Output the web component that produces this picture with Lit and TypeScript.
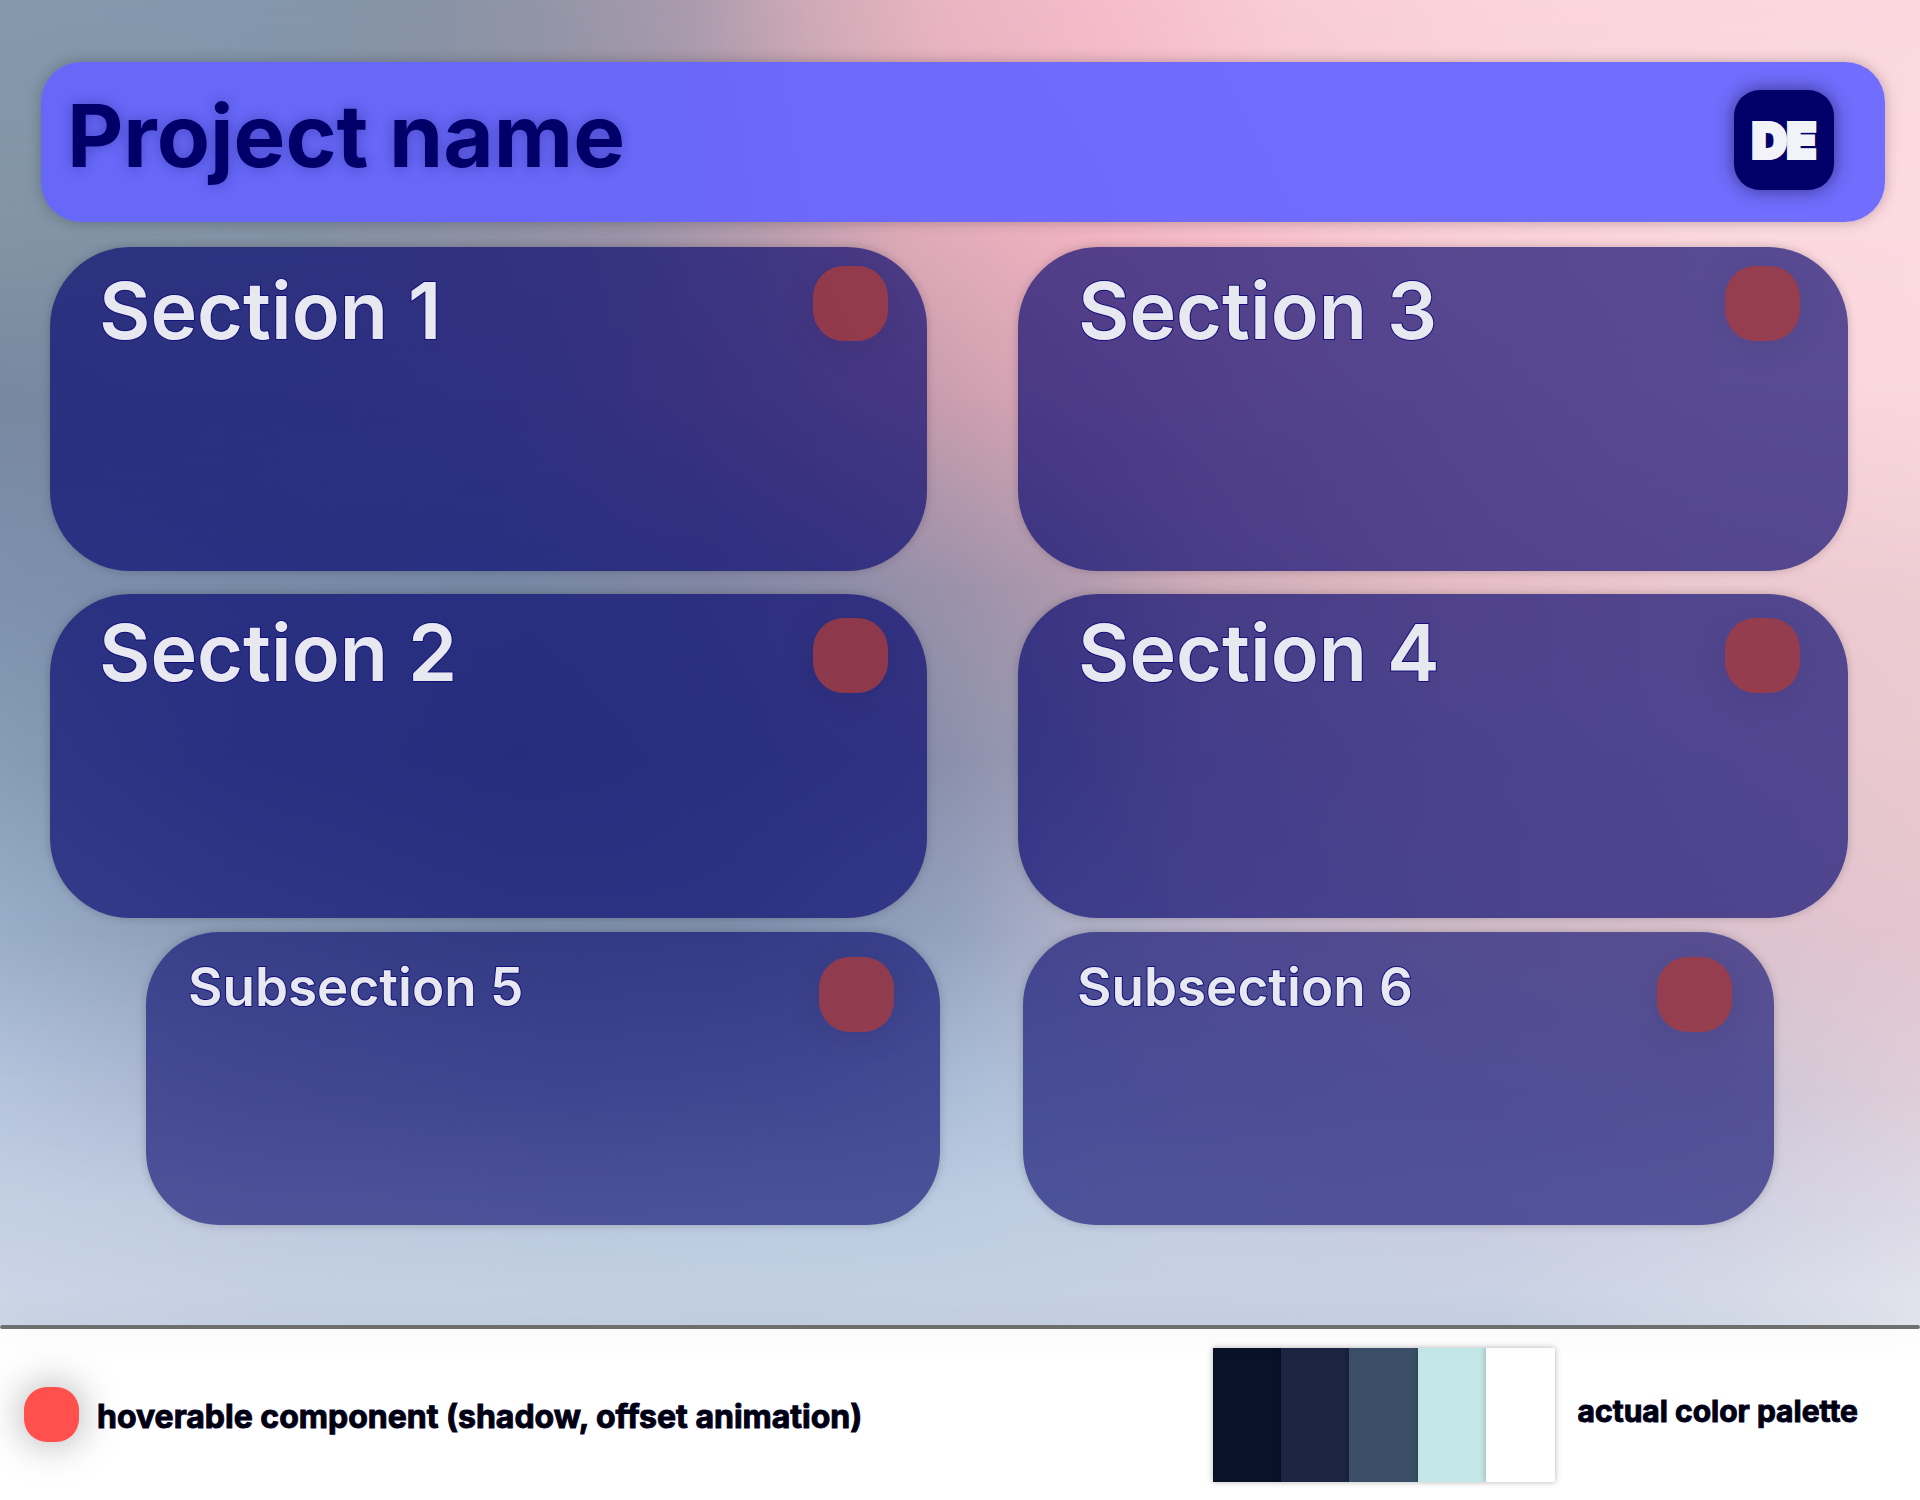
import { LitElement, html, css } from "lit";
import { customElement, property } from "lit/decorators.js";
import { styleMap } from "lit/directives/style-map.js";

/* Colour field behind the board: each band is one horizontal gradient,
   faded in over the band above it. Positions are percentages. */
interface Band {
  at: number;
  stops: [string, number][];
}

const BANDS: Band[] = [
  { at: 0, stops: [["#8699ad", 0], ["#8497ad", 13], ["#8894a6", 22], ["#9295a7", 28], ["#ab9bae", 36], ["#cfaab7", 42], ["#eab5c2", 49], ["#f6bdcb", 58], ["#f9cdd5", 67], ["#fbd5dc", 80], ["#fcd8df", 100]] },
  { at: 18, stops: [["#8294a5", 0], ["#8391a5", 16], ["#8f90a4", 26], ["#9b93a8", 33], ["#b89dae", 40], ["#dda9b7", 47], ["#efb2c0", 56], ["#f6bdc9", 64], ["#f9cfd6", 76], ["#fbd8de", 90], ["#fdd9e0", 100]] },
  { at: 30, stops: [["#7888a0", 0], ["#7b88a5", 13], ["#8589a5", 26], ["#a28ea5", 36], ["#c098aa", 45], ["#cfa0b0", 51], ["#dea9b9", 57], ["#ebb9c5", 66], ["#f2c8d0", 78], ["#fad5dc", 90], ["#fbd7dd", 100]] },
  { at: 44, stops: [["#7d90ae", 0], ["#798ba8", 13], ["#7488a5", 25], ["#8187a4", 37], ["#918ea9", 45], ["#9d92aa", 50], ["#ad98ad", 55], ["#cfacb8", 63], ["#e5bdc6", 76], ["#ecc8d0", 88], ["#efccd3", 100]] },
  { at: 57, stops: [["#869db5", 0], ["#7a8baa", 12], ["#6e829f", 27], ["#7986a4", 38], ["#8a8fab", 49], ["#9899b1", 54], ["#c0aec0", 62], ["#d8bcc8", 75], ["#e3c6cf", 88], ["#ebc9d0", 100]] },
  { at: 70, stops: [["#98adc8", 0], ["#8b9db8", 12], ["#7e92ad", 26], ["#8190ae", 38], ["#94a2bf", 50], ["#aaaec6", 55], ["#c1b7cb", 64], ["#d1bdca", 76], ["#dcc3ce", 88], ["#e4c5cf", 100]] },
  { at: 82, stops: [["#b5c3dc", 0], ["#a7b2ce", 13], ["#9ba9c8", 30], ["#a1afcd", 42], ["#adbfd8", 51], ["#b9c0d7", 60], ["#c5c2d5", 76], ["#cec6d6", 90], ["#dfcdd9", 100]] },
  { at: 91, stops: [["#c3d0e3", 0], ["#bfcadf", 13], ["#bac9de", 30], ["#bbcce1", 48], ["#c4cfe2", 62], ["#c8cce1", 76], ["#d1d1e2", 90], ["#dcd8e5", 100]] },
  { at: 100, stops: [["#cdd6e7", 0], ["#c6d2e4", 15], ["#c5d1e3", 40], ["#c7d1e4", 62], ["#c9d3e5", 78], ["#d5dce9", 90], ["#e3e6ee", 100]] },
];

const PALETTE = ["#0a122a", "#1c2541", "#3b5068", "#c3e8e7", "#ffffff"];

@customElement("color-field")
export class ColorField extends LitElement {
  static styles = css`
    :host {
      position: absolute;
      inset: 0;
    }
    .band {
      position: absolute;
      inset: 0;
    }
  `;

  render() {
    return BANDS.map((band, i) => {
      const stops = band.stops.map(([c, p]) => `${c} ${p}%`).join(", ");
      const fade = i
        ? `linear-gradient(to bottom, transparent ${BANDS[i - 1].at}%, #000 ${band.at}%)`
        : "none";
      return html`<div
        class="band"
        style=${styleMap({
          backgroundImage: `linear-gradient(to right, ${stops})`,
          maskImage: fade,
        })}
      ></div>`;
    });
  }
}

@customElement("section-card")
export class SectionCard extends LitElement {
  @property() heading = "";

  static styles = css`
    :host {
      display: flex;
      justify-content: space-between;
      align-items: flex-start;
      box-sizing: border-box;
      min-height: 324px;
      padding: 19px 39px 24px 49px;
      border-radius: 80px;
      background: rgba(0, 0, 107, 0.65);
      box-shadow: 0 0 10px rgba(0, 0, 0, 0.2);
    }
    :host([wide]) {
      padding-left: 60px;
      padding-right: 48px;
    }
    :host([lower]) {
      padding-top: 14px;
    }
    :host([lower]) .action {
      margin-top: 10px;
    }
    :host([sub]) {
      min-height: 293px;
      padding: 25px 46px 25px 42px;
      border-radius: 73px;
      background: rgba(0, 0, 105, 0.6);
    }
    :host([sub][wide]) {
      padding-left: 54px;
      padding-right: 42px;
    }
    .title {
      margin: 0;
      font-size: 79px;
      line-height: 88px;
      font-weight: 600;
      color: #e7e8f0;
      -webkit-text-stroke: 2px #14107a;
      paint-order: stroke fill;
    }
    :host([sub]) .title {
      font-size: 53px;
      line-height: 60px;
    }
    .action {
      flex: none;
      width: 75px;
      height: 75px;
      padding: 0;
      border: 0;
      border-radius: 31px;
      background: rgba(166, 59, 63, 0.8);
      box-shadow: 0 4px 36px rgba(0, 0, 0, 0.08);
      cursor: pointer;
      transition: translate 0.2s, box-shadow 0.2s;
    }
    .action:hover {
      translate: 0 -4px;
      box-shadow: 0 8px 30px rgba(0, 0, 0, 0.4);
    }
  `;

  render() {
    return html`
      <h2 class="title">${this.heading}</h2>
      <button class="action" type="button" aria-label="Open ${this.heading}"></button>
    `;
  }
}

@customElement("app-root")
export class AppRoot extends LitElement {
  static styles = css`
    :host {
      display: flex;
      flex-direction: column;
      min-height: 100vh;
      background: #fff;
      font-family: Inter, "Open Sans", sans-serif;
    }
    .board {
      position: relative;
      isolation: isolate;
      padding-bottom: 100px;
    }
    color-field {
      z-index: -1;
    }
    .bar {
      display: flex;
      align-items: center;
      justify-content: space-between;
      box-sizing: border-box;
      min-height: 160px;
      margin: 0 35px 25px 41px;
      padding: 0 51px 4px 26px;
      border-radius: 40px;
      background: rgba(101, 100, 255, 0.92);
      box-shadow: 0 0 14px rgba(0, 0, 0, 0.25);
    }
    .top {
      padding-top: 62px;
    }
    .name {
      margin: 0;
      padding-bottom: 8px;
      font-size: 87px;
      line-height: 104px;
      font-weight: 700;
      color: #000068;
      text-shadow: 0 0 14px rgba(0, 0, 80, 0.3);
    }
    .lang {
      width: 100px;
      height: 100px;
      padding: 0;
      border: 0;
      border-radius: 26px;
      background: #000068;
      color: #f2f2f9;
      font-family: inherit;
      font-size: 48px;
      font-weight: 900;
      -webkit-text-stroke: 4px #f2f2f9;
      stroke-linejoin: round;
      box-shadow: 0 0 18px rgba(0, 0, 40, 0.55);
      cursor: pointer;
    }
    .sections {
      display: grid;
      grid-template-columns: 877fr 830fr;
      gap: 23px 91px;
      padding: 0 72px 14px 50px;
    }
    .subsections {
      display: grid;
      grid-template-columns: 794fr 751fr;
      gap: 83px;
      padding: 0 146px;
    }
    .divider {
      position: relative;
      width: 100%;
      height: 4px;
      margin: 0;
      border: 0;
      border-radius: 2px;
      background: #6e7070;
      box-shadow: 0 0 36px rgba(0, 0, 0, 0.2);
    }
    .legend {
      display: flex;
      flex: 1;
      align-items: center;
      padding: 0 62px 0 24px;
      color: #00000f;
      font-size: 32px;
      line-height: 36px;
      font-weight: 700;
    }
    .dot {
      flex: none;
      width: 55px;
      height: 55px;
      margin-right: 18px;
      border-radius: 23px;
      background: #ff504d;
      box-shadow: 0 0 40px rgba(0, 0, 0, 0.35);
    }
    .label {
      margin: 0;
      padding-top: 4px;
      -webkit-text-stroke: 1px #00003c;
      paint-order: stroke fill;
    }
    .palette {
      display: grid;
      flex: none;
      grid-template-columns: repeat(5, 1fr);
      width: 342px;
      height: 134px;
      margin: 0 23px 0 auto;
      padding: 0;
      list-style: none;
    }
    .swatch {
      box-shadow: 0 0 6px rgba(0, 0, 0, 0.3);
    }
    .palette-label {
      padding: 0 0 8px;
      font-size: 30px;
    }
  `;

  render() {
    return html`
      <main class="board">
        <color-field></color-field>
        <div class="top">
          <header class="bar">
            <h1 class="name">Project name</h1>
            <button class="lang" type="button">DE</button>
          </header>
        </div>
        <div class="sections">
          <section-card heading="Section 1"></section-card>
          <section-card heading="Section 3" wide></section-card>
          <section-card heading="Section 2" lower></section-card>
          <section-card heading="Section 4" lower wide></section-card>
        </div>
        <div class="subsections">
          <section-card heading="Subsection 5" sub></section-card>
          <section-card heading="Subsection 6" sub wide></section-card>
        </div>
      </main>
      <hr class="divider" />
      <footer class="legend">
        <span class="dot"></span>
        <p class="label">hoverable component (shadow, offset animation)</p>
        <ul class="palette">
          ${PALETTE.map(
            (color) => html`<li class="swatch" style=${styleMap({ background: color })}></li>`,
          )}
        </ul>
        <p class="label palette-label">actual color palette</p>
      </footer>
    `;
  }
}
